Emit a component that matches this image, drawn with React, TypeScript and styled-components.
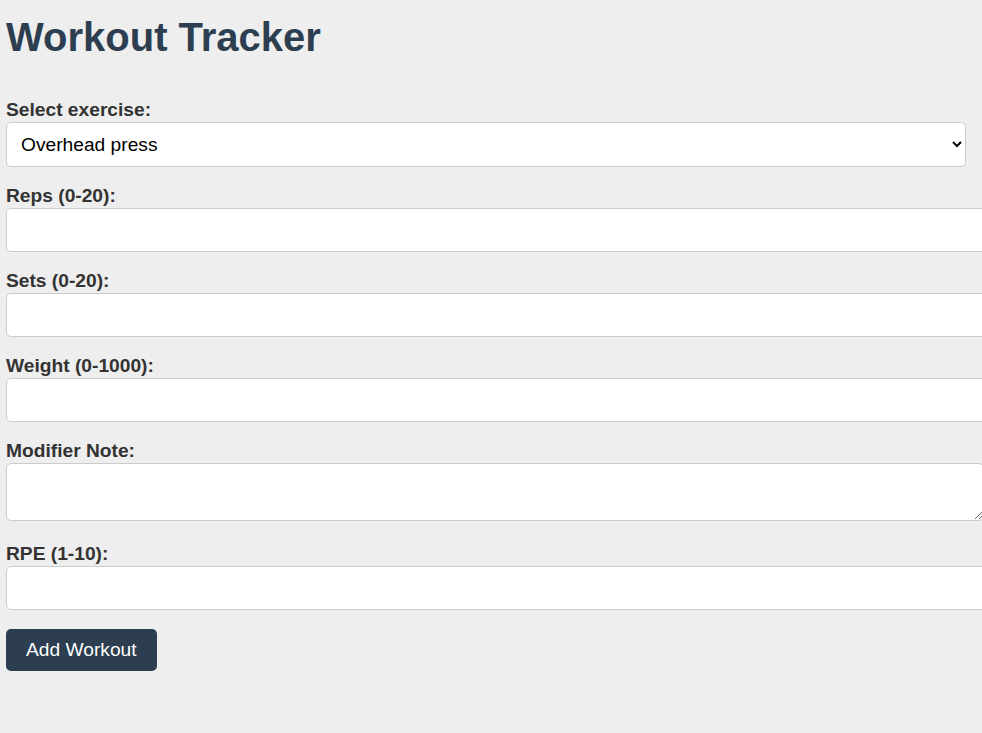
import React, { useState } from "react";
import styled, { createGlobalStyle } from "styled-components";

const GlobalStyle = createGlobalStyle`
  html, body {
    margin: 0;
    padding: 0;
    background: #eeeeee;
    overflow: hidden;
  }
  body {
    font-family: "Liberation Sans", Arial, sans-serif;
    color: #333333;
  }
`;

const Page = styled.div`
  width: 960px;
  padding: 15px 0 40px 6px;
`;

const Title = styled.h1`
  margin: 0 0 39px;
  font-size: 40px;
  font-weight: 700;
  color: #2c3e50;
`;

const Form = styled.form`
  display: flex;
  flex-direction: column;
`;

const Field = styled.div`
  margin-bottom: 18px;
`;

const Label = styled.label`
  display: block;
  margin-bottom: 1px;
  font-size: 19.2px;
  font-weight: 700;
  color: #333333;
`;

const Select = styled.select`
  display: block;
  width: 100%;
  height: 45px;
  padding: 0 10px;
  font-family: "Liberation Sans", Arial, sans-serif;
  font-size: 19.2px;
  color: #000000;
  background: #ffffff;
  border: 1px solid #cccccc;
  border-radius: 5px;
`;

const Input = styled.input`
  display: block;
  width: 100%;
  height: 22px;
  padding: 10px;
  font-family: "Liberation Sans", Arial, sans-serif;
  font-size: 19.2px;
  background: #ffffff;
  border: 1px solid #cccccc;
  border-radius: 5px;
  outline: none;
`;

const TextArea = styled.textarea`
  display: block;
  width: 100%;
  height: 36px;
  margin: 1px 0 4px;
  padding: 10px 8px;
  font-family: "Liberation Mono", monospace;
  font-size: 13px;
  background: #ffffff;
  border: 1px solid #cccccc;
  border-radius: 5px;
  outline: none;
`;

const SubmitButton = styled.button`
  align-self: flex-start;
  height: 42px;
  margin-top: 1px;
  padding: 0 20px;
  font-family: "Liberation Sans", Arial, sans-serif;
  font-size: 19.2px;
  color: #ffffff;
  background: #2c3e50;
  border: none;
  border-radius: 5px;
  cursor: pointer;
`;

const exercises = ["Squat", "Bench press", "Deadlift", "Overhead press", "Barbell row"];

const numberFields = [
  { id: "reps", label: "Reps (0-20):", min: 0, max: 20 },
  { id: "sets", label: "Sets (0-20):", min: 0, max: 20 },
  { id: "weight", label: "Weight (0-1000):", min: 0, max: 1000 },
];

const App: React.FC = () => {
  const [exercise, setExercise] = useState("Overhead press");

  return (
    <>
      <GlobalStyle />
      <Page>
        <Title>Workout Tracker</Title>
        <Form onSubmit={(e) => e.preventDefault()}>
          <Field>
            <Label htmlFor="exercise">Select exercise:</Label>
            <Select
              id="exercise"
              value={exercise}
              onChange={(e) => setExercise(e.target.value)}
            >
              {exercises.map((name) => (
                <option key={name} value={name}>
                  {name}
                </option>
              ))}
            </Select>
          </Field>
          {numberFields.map((field) => (
            <Field key={field.id}>
              <Label htmlFor={field.id}>{field.label}</Label>
              <Input id={field.id} type="number" min={field.min} max={field.max} />
            </Field>
          ))}
          <Field>
            <Label htmlFor="note">Modifier Note:</Label>
            <TextArea id="note" />
          </Field>
          <Field>
            <Label htmlFor="rpe">RPE (1-10):</Label>
            <Input id="rpe" type="number" min={1} max={10} />
          </Field>
          <SubmitButton type="submit">Add Workout</SubmitButton>
        </Form>
      </Page>
    </>
  );
};

export default App;
